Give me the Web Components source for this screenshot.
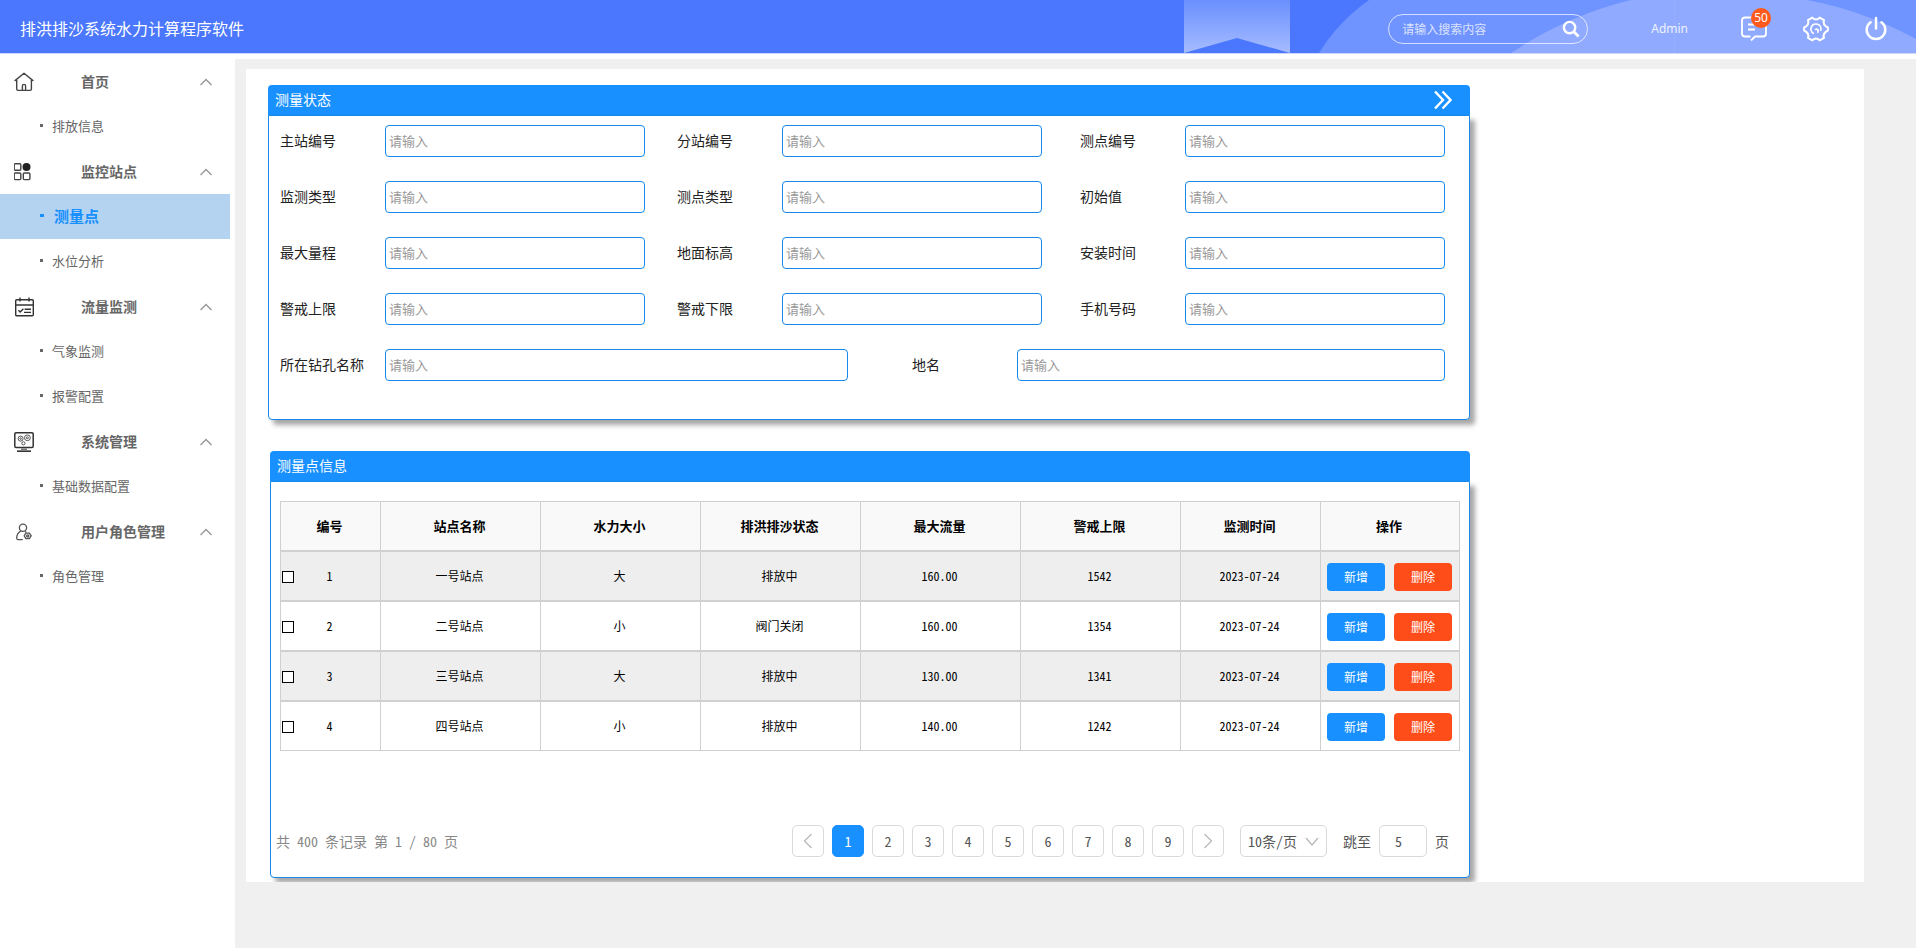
<!DOCTYPE html>
<html lang="zh-CN">
<head>
<meta charset="utf-8">
<title>排洪排沙系统水力计算程序软件</title>
<style>
  body {
    margin: 0;
    background: #f0f0f0;
    color: #222;
    font-family: "Noto Sans CJK SC", "Noto Sans", sans-serif;
    font-size: 14px;
    line-height: 20px;
    font-weight: 400;
    font-feature-settings: "hwid";
  }
</style>
</head>
<body>
<app-shell>
  <app-header slot="header" heading="排洪排沙系统水力计算程序软件"></app-header>
  <side-nav slot="nav">
    <nav-group label="首页">
      <svg slot="icon" width="20" height="20" viewBox="0 0 20 20" fill="none" stroke="#444" stroke-width="1.4" stroke-linejoin="round" stroke-linecap="round"><path d="M1 8.6 10 1.2 19 8.6M2.7 8V17q0 1.4 1.4 1.4H16q1.4 0 1.4-1.4V8M8.4 18.2V14a1.6 1.6 0 0 1 3.2 0V18.2"/></svg>
      <nav-link label="排放信息"></nav-link>
    </nav-group>
    <nav-group label="监控站点">
      <svg slot="icon" width="20" height="20" viewBox="0 0 20 20" fill="none" stroke="#444" stroke-width="1.4"><rect x="0.2" y="1.7" width="6.6" height="6.6" rx="1"/><rect x="0.2" y="11" width="6.6" height="6.6" rx="1"/><rect x="9.3" y="11" width="6.6" height="6.6" rx="1"/><circle cx="12.5" cy="5" r="4" fill="#222" stroke="none"/></svg>
      <nav-link label="测量点" current></nav-link>
      <nav-link label="水位分析"></nav-link>
    </nav-group>
    <nav-group label="流量监测">
      <svg slot="icon" width="20" height="20" viewBox="0 0 20 20" fill="none" stroke="#333" stroke-width="1.4"><rect x="1.7" y="2.7" width="17.6" height="16" rx="1"/><path d="M1.700 8H19.300M6 .6V4.600M15 .6V4.600M4.400 13.200 6.200 15 9.400 11.800M10.600 12.200H17M10 15.400H17"/></svg>
      <nav-link label="气象监测"></nav-link>
      <nav-link label="报警配置"></nav-link>
    </nav-group>
    <nav-group label="系统管理">
      <svg slot="icon" width="20" height="20" viewBox="0 0 20 20" fill="none" stroke="#333"><rect x=".8" y=".8" width="18.400" height="14.600" rx="1.200" stroke-width="1.500"/><path d="M3 19.200H17" stroke-width="1.600"/><path d="M7 17.200H13" stroke-width="1"/><g stroke="#555"><circle cx="6.600" cy="6.600" r="2.500"/><circle cx="6.600" cy="6.600" r=".8"/><circle cx="13.400" cy="5.800" r="2.900"/><circle cx="13.400" cy="5.800" r="1"/><circle cx="9.400" cy="11.300" r="1.600"/></g></svg>
      <nav-link label="基础数据配置"></nav-link>
    </nav-group>
    <nav-group label="用户角色管理">
      <svg slot="icon" width="20" height="20" viewBox="0 0 20 20" fill="none" stroke="#555" stroke-width="1.3"><circle cx="9" cy="5.800" r="3.600"/><path d="M8.800 17.600H4.200Q2.600 17.600 2.700 15.600 3 11 6.800 9.200M11.200 9.400 12.400 10.400"/><path d="M10.200 13.800 11.800 11.200H15.400L17.200 13.800 15.400 16.600H11.800Z"/><circle cx="13.700" cy="13.900" r="1.100"/></svg>
      <nav-link label="角色管理"></nav-link>
    </nav-group>
  </side-nav>
  <panel-card heading="测量状态" collapsible>
    <measure-form></measure-form>
  </panel-card>
  <panel-card class="info" heading="测量点信息">
    <station-table></station-table>
    <page-bar total="400" pages="80"></page-bar>
  </panel-card>
</app-shell>

<script>
function component(name, render) {
  customElements.define(name, class extends HTMLElement {
    constructor() {
      super();
      this.attachShadow({ mode: "open" });
    }
    connectedCallback() {
      this.shadowRoot.innerHTML = "<style>*{box-sizing:border-box}</style>" + render(this);
    }
  });
}

component("app-shell", () => `
  <style>
    :host { display: flex; flex-direction: column; min-height: 100vh; }
    .main { flex: 1; display: flex; align-items: stretch; }
    aside { flex: 0 0 235px; background: #fff; }
    main { flex: 1; min-width: 0; padding: 10px 52px 0 11px; }
    .panel {
      display: grid;
      grid-template-columns: minmax(0, 1202fr) minmax(0, 394fr);
      row-gap: 31px;
      padding: 16px 0 4px 22px;
      background: #fff;
      overflow: hidden;
    }
    ::slotted(panel-card) { grid-column: 1; }
    ::slotted(.info) { margin-left: 2px; }
  </style>
  <slot name="header"></slot>
  <div class="main">
    <aside><slot name="nav"></slot></aside>
    <main><div class="panel"><slot></slot></div></main>
  </div>`);

component("app-header", (el) => `
  <style>
    :host { display: block; background: #fff; padding-bottom: 5px; }
    header {
      position: relative;
      display: flex;
      align-items: center;
      height: 54px;
      padding: 4px 28px 0 20px;
      background: #4a77fd;
      border-bottom: 1px solid #ccd6fa;
      color: #fff;
    }
    .art { position: absolute; right: 0; top: 0; }
    h1 { position: relative; flex: 1; margin: 0; padding-bottom: 2px; font-size: 16px; line-height: 24px; font-weight: 400; }
    .search {
      position: relative;
      display: flex;
      align-items: center;
      width: 200px;
      height: 30px;
      padding: 0 7px 0 13px;
      border: 1px solid rgba(255,255,255,.7);
      border-radius: 15px;
    }
    input {
      flex: 1;
      min-width: 0;
      padding: 0;
      border: 0;
      outline: 0;
      background: none;
      color: #fff;
      font: inherit;
      font-size: 12px;
    }
    input::placeholder { color: rgba(255,255,255,.75); }
    button { display: block; position: relative; padding: 0; border: 0; background: none; color: #fff; font: inherit; }
    svg { display: block; }
    .user { position: relative; margin: 0 52px 0 63px; font-family: "Noto Sans", sans-serif; font-size: 12px; color: #eef2ff; text-decoration: none; }
    .badge {
      position: absolute;
      left: 11px;
      top: -8px;
      width: 20px;
      height: 20px;
      border-radius: 50%;
      background: #ff5a1c;
      font: 12px/20px "Noto Sans", sans-serif;
      text-align: center;
    }
    .gear { margin: 0 35px; }
  </style>
  <header>
    <svg class="art" width="740" height="53" viewBox="0 0 740 53" aria-hidden="true">
      <defs><linearGradient id="g" x1="0" y1="0" x2="0" y2="1"><stop offset="0" stop-color="#6a8ffe"/><stop offset="1" stop-color="#a6bcff"/></linearGradient></defs>
      <path d="M8 0H114V53L61 38 8 53Z" fill="url(#g)"/>
      <path d="M143 53Q162 22 193 0H740V53Z" fill="#7094ff"/>
      <path d="M335 53A372 372 0 0 1 455 0H631A372 372 0 0 1 740 39V53Z" fill="#8faaff"/>
      <path d="M498.500 0V53" stroke="#96afff"/>
    </svg>
    <h1>${el.getAttribute("heading")}</h1>
    <form class="search" role="search">
      <input type="text" placeholder="请输入搜索内容" aria-label="搜索">
      <button type="button" aria-label="搜索按钮">
        <svg width="18" height="18" viewBox="0 0 18 18" fill="none" stroke="#fff"><circle cx="7.600" cy="7.600" r="5.700" stroke-width="2.400"/><path d="M11.800 11.800 16.600 16.600" stroke-width="2.800"/></svg>
      </button>
    </form>
    <a class="user" href="#">Admin</a>
    <button type="button" aria-label="消息">
      <svg width="28" height="26" viewBox="0 0 28 26" fill="none" stroke="#fff" stroke-width="1.800" stroke-linejoin="round"><path d="M10.500 20.500H5Q2 20.500 2 17.500V4.500Q2 1.500 5 1.500H23Q26 1.500 26 4.500V17.500Q26 20.500 23 20.500H15L11 24.500M8 8.500H15M8 13.500H15"/></svg>
      <span class="badge">50</span>
    </button>
    <button class="gear" type="button" aria-label="设置">
      <svg width="26" height="26" viewBox="0 0 26 26" fill="none" stroke="#fff" stroke-width="2" stroke-linejoin="round" stroke-linecap="round"><path d="M16.700 1.600Q13 5.400 9.300 1.600L5 4.100Q6.700 8.800 1.100 11.500V14.500Q6.700 17.200 5 21.900L9.300 24.400Q13 20.600 16.700 24.400L21 21.900Q19.300 17.200 24.900 14.500V11.500Q19.300 8.800 21 4.100Z"/><path stroke-width="1.700" d="M10.200 17.200A5 5 0 1 1 17.800 14.200M12.600 13.400A1.800 1.800 0 0 1 14.800 16.200"/></svg>
    </button>
    <button type="button" aria-label="退出">
      <svg width="24" height="26" viewBox="0 0 24 26" fill="none" stroke="#fff" stroke-width="2.500" stroke-linecap="round"><path d="M12 2V12.500M6.600 6.200A9.300 9.300 0 1 0 17.400 6.200"/></svg>
    </button>
  </header>`);

component("side-nav", () => `
  <style>
    :host { display: block; width: 230px; }
  </style>
  <nav aria-label="主导航"><slot></slot></nav>`);

component("nav-group", (el) => `
  <style>
    :host { display: block; }
    button {
      display: grid;
      grid-template-columns: 67px 1fr 12px;
      align-items: center;
      width: 100%;
      height: 45px;
      padding: 0 18px 0 14px;
      border: 0;
      background: none;
      color: #666;
      font: inherit;
      font-weight: 700;
      text-align: left;
    }
    span { padding-bottom: 2px; }
    ::slotted(svg) { display: block; }
  </style>
  <button type="button" aria-expanded="true">
    <slot name="icon"></slot>
    <span>${el.getAttribute("label")}</span>
    <svg width="12" height="8" viewBox="0 0 12 8" fill="none" stroke="#999" stroke-width="1.500"><path d="M.5 7 6 1.500 11.500 7"/></svg>
  </button>
  <slot></slot>`);

component("nav-link", (el) => `
  <style>
    :host { display: block; }
    a {
      display: flex;
      align-items: center;
      gap: 9px;
      height: 45px;
      padding: 0 0 2px 40px;
      color: #666;
      font-size: 13px;
      text-decoration: none;
    }
    a::before { content: ""; width: 3px; height: 3px; background: currentColor; }
    :host([current]) a { gap: 10px; background: #b3d3f1; color: #1890ff; font-size: 15px; font-weight: 700; }
    :host([current]) a::before { width: 4px; }
  </style>
  <a href="#" ${el.hasAttribute("current") ? 'aria-current="page"' : ""}>${el.getAttribute("label")}</a>`);

component("panel-card", (el) => `
  <style>
    :host { display: block; }
    header {
      display: flex;
      align-items: center;
      justify-content: space-between;
      height: 30px;
      padding: 0 18px 0 7px;
      border-radius: 4px 4px 0 0;
      background: #1890ff;
      color: #fff;
    }
    h2 { margin: 0; padding-bottom: 2px; font: inherit; }
    button { padding: 0; border: 0; background: none; }
    svg { display: block; }
    .body {
      border: 1px solid #1688e8;
      border-radius: 0 0 4px 4px;
      background: #fff;
      box-shadow: 5px 5px 5px rgba(0,0,0,.35);
    }
  </style>
  <header>
    <h2>${el.getAttribute("heading")}</h2>
    ${el.hasAttribute("collapsible") ? `<button type="button" aria-label="展开">
      <svg width="18" height="20" viewBox="0 0 18 20" fill="none" stroke="#fff" stroke-width="2.400"><path d="M1 1.500 9 10 1 18.500M8.500 1.500 16.500 10 8.500 18.500"/></svg>
    </button>` : ""}
  </header>
  <div class="body"><slot></slot></div>`);

component("form-field", (el) => `
  <style>
    :host { display: block; }
    div { display: grid; grid-template-columns: 105px minmax(0, 1fr); align-items: center; }
    label { padding-bottom: 2px; }
    input {
      width: 100%;
      height: 32px;
      padding: 0 3px 2px;
      border: 1px solid #1688e8;
      border-radius: 4px;
      outline: 0;
      background: #fff;
      color: #222;
      font: inherit;
      font-size: 13px;
    }
    input::placeholder { color: #999; }
  </style>
  <div>
    <label for="field">${el.getAttribute("label")}</label>
    <input id="field" type="text" placeholder="请输入">
  </div>`);

component("measure-form", () => {
  const names = ["主站编号", "分站编号", "测点编号", "监测类型", "测点类型", "初始值",
    "最大量程", "地面标高", "安装时间", "警戒上限", "警戒下限", "手机号码"];
  return `
  <style>
    :host { display: block; padding: 9px 24px 38px 11px; }
    form, .last { display: grid; row-gap: 24px; }
    form { grid-template-columns: minmax(0, 397fr) minmax(0, 403fr) minmax(0, 365fr); }
    form > :nth-child(3n+1) { margin-right: 32px; }
    form > :nth-child(3n+2) { margin-right: 38px; }
    form > .last { grid-column: 1 / -1; grid-template-columns: minmax(0, 568fr) minmax(0, 533fr); column-gap: 64px; margin-right: 0; }
  </style>
  <form>
    ${names.map((n) => `<form-field label="${n}"></form-field>`).join("")}
    <div class="last">
      <form-field label="所在钻孔名称"></form-field>
      <form-field label="地名"></form-field>
    </div>
  </form>`;
});

component("station-table", () => {
  const heads = ["编号", "站点名称", "水力大小", "排洪排沙状态", "最大流量", "警戒上限", "监测时间", "操作"];
  const widths = [100, 160, 160, 160, 160, 160, 140, 140];
  const rows = [
    ["一号站点", "大", "排放中", "160.00", "1542", "2023-07-24"],
    ["二号站点", "小", "阀门关闭", "160.00", "1354", "2023-07-24"],
    ["三号站点", "大", "排放中", "130.00", "1341", "2023-07-24"],
    ["四号站点", "小", "排放中", "140.00", "1242", "2023-07-24"],
  ];
  return `
  <style>
    :host { display: block; padding: 19px 9px 0; }
    table { width: 100%; border-collapse: separate; border-spacing: 0; table-layout: fixed; color: #000; font-size: 12px; }
    th, td { height: 50px; padding: 0 2px 0 0; border: 1px solid #d0d0d0; border-right: 0; text-align: center; }
    th:last-child, td:last-child { border-right: 1px solid #d0d0d0; }
    th { background: #f9f9f9; font-size: 13px; font-weight: 700; }
    tbody tr:nth-child(odd) { background: #eee; }
    .pick { display: grid; grid-template-columns: 12px 1fr 12px; align-items: center; padding: 0 1px; }
    input { appearance: none; width: 12px; height: 12px; margin: 2px 0 0; border: 1px solid #000; background: #fff; }
    input:checked { background: #1890ff; }
    .actions { display: flex; gap: 9px; padding: 2px 0 0 6px; }
    button { width: 58px; height: 28px; padding: 0; border: 0; border-radius: 4px; background: #1890ff; color: #fff; font: inherit; }
    .delete { background: #ff4d1a; }
  </style>
  <table>
    <colgroup>${widths.map((w) => `<col style="width:${w}px">`).join("")}</colgroup>
    <thead><tr>${heads.map((h) => `<th scope="col">${h}</th>`).join("")}</tr></thead>
    <tbody>${rows.map((r, i) => `<tr>
      <td><div class="pick"><input type="checkbox" aria-label="选择${r[0]}"><span>${i + 1}</span></div></td>
      ${r.map((c) => `<td>${c}</td>`).join("")}
      <td><div class="actions"><button type="button">新增</button><button class="delete" type="button">删除</button></div></td>
    </tr>`).join("")}</tbody>
  </table>`;
});

component("page-bar", (el) => `
  <style>
    :host { display: flex; align-items: center; justify-content: space-between; padding: 74px 20px 20px 5px; color: #555; }
    .total { color: #888; }
    nav { display: flex; align-items: center; gap: 8px; }
    button, select, input {
      height: 32px;
      padding: 0;
      border: 1px solid #d9d9d9;
      border-radius: 5px;
      outline: 0;
      background: #fff;
      color: #555;
      font: inherit;
      font-feature-settings: inherit;
    }
    button { width: 32px; display: grid; place-items: center; }
    button[aria-current] { border-color: #1890ff; background: #1890ff; color: #fff; }
    .size { position: relative; margin: 0 8px; }
    select { display: block; width: 87px; padding-left: 7px; appearance: none; }
    .size svg { position: absolute; right: 8px; top: 12px; pointer-events: none; }
    input { width: 48px; padding-left: 15px; }
  </style>
  <span class="total">共 ${el.getAttribute("total")} 条记录 第 1 / ${el.getAttribute("pages")} 页</span>
  <nav aria-label="分页">
    <button type="button" aria-label="上一页"><svg width="10" height="16" viewBox="0 0 10 16" fill="none" stroke="#bbb" stroke-width="1.400"><path d="M8.500 1 1.500 8 8.500 15"/></svg></button>
    ${[1,2,3,4,5,6,7,8,9].map((n) => `<button type="button" ${n === 1 ? 'aria-current="page"' : ""}>${n}</button>`).join("")}
    <button type="button" aria-label="下一页"><svg width="10" height="16" viewBox="0 0 10 16" fill="none" stroke="#bbb" stroke-width="1.400"><path d="M1.500 1 8.500 8 1.500 15"/></svg></button>
    <div class="size">
      <select aria-label="每页条数"><option>10条/页</option><option>20条/页</option></select>
      <svg width="14" height="9" viewBox="0 0 14 9" fill="none" stroke="#bbb" stroke-width="1.400"><path d="M1 1 7 8 13 1"/></svg>
    </div>
    <label for="jump">跳至</label>
    <input id="jump" type="text" value="5">
    <span>页</span>
  </nav>`);
</script>
</body>
</html>
